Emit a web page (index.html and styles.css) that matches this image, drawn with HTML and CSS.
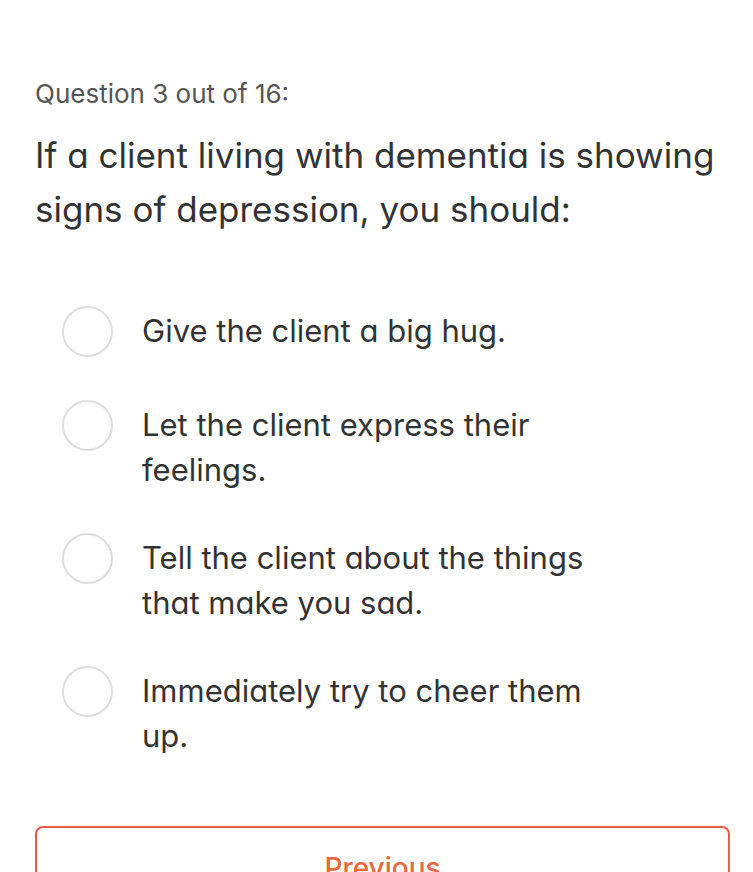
FILE: index.html
```html
<!DOCTYPE html>
<html lang="en">
<head>
  <meta charset="UTF-8">
  <meta name="viewport" content="width=device-width, initial-scale=1.0">
  <title>Quiz</title>
  <link rel="stylesheet" href="styles.css">
</head>
<body>

<div class="quiz">
  <div class="quiz-count">Question 3 out of 16:</div>
  <h2 class="quiz-question">If a client living with dementia is showing signs of depression, you should:</h2>

  <div class="options">
    <label class="option">
      <span class="radio"></span>
      <span class="option-text">Give the client a big hug.</span>
    </label>
    <label class="option">
      <span class="radio"></span>
      <span class="option-text">Let the client express their feelings.</span>
    </label>
    <label class="option">
      <span class="radio"></span>
      <span class="option-text">Tell the client about the things that make you sad.</span>
    </label>
    <label class="option">
      <span class="radio"></span>
      <span class="option-text">Immediately try to cheer them up.</span>
    </label>
  </div>

  <button class="prev-btn">Previous</button>
</div>

</body>
</html>
```

FILE: styles.css
```css
body {
  font-family: Inter, "Noto Sans", sans-serif;
  font-feature-settings: "cv11";
  background-color: #ffffff;
  margin: 0;
  padding: 0;
}
.quiz {
  padding: 76px 24px 0 35px;
}
.quiz-count {
  font-size: 26px;
  line-height: 36px;
  color: #555;
}
.quiz-question {
  font-size: 35px;
  font-weight: 400;
  line-height: 54px;
  color: #333;
  margin: 16px 0 0;
}
.options {
  margin-top: 72px;
  padding-left: 27px;
}
.option {
  display: flex;
  align-items: flex-start;
  gap: 29px;
  margin-bottom: 43px;
}
.radio {
  flex: none;
  width: 47px;
  height: 47px;
  border: 2px solid #ddd;
  border-radius: 50%;
  margin: -2px 0 2px;
}
.option-text {
  font-size: 31px;
  line-height: 45px;
  color: #333;
  max-width: 470px;
}
.prev-btn {
  display: block;
  width: 695px;
  height: 84px;
  margin-top: 68px;
  background: #fff;
  border: 2px solid #ef5a45;
  border-radius: 8px;
  color: #e8683a;
  font-family: inherit;
  font-size: 28px;
  font-weight: 500;
}
```
